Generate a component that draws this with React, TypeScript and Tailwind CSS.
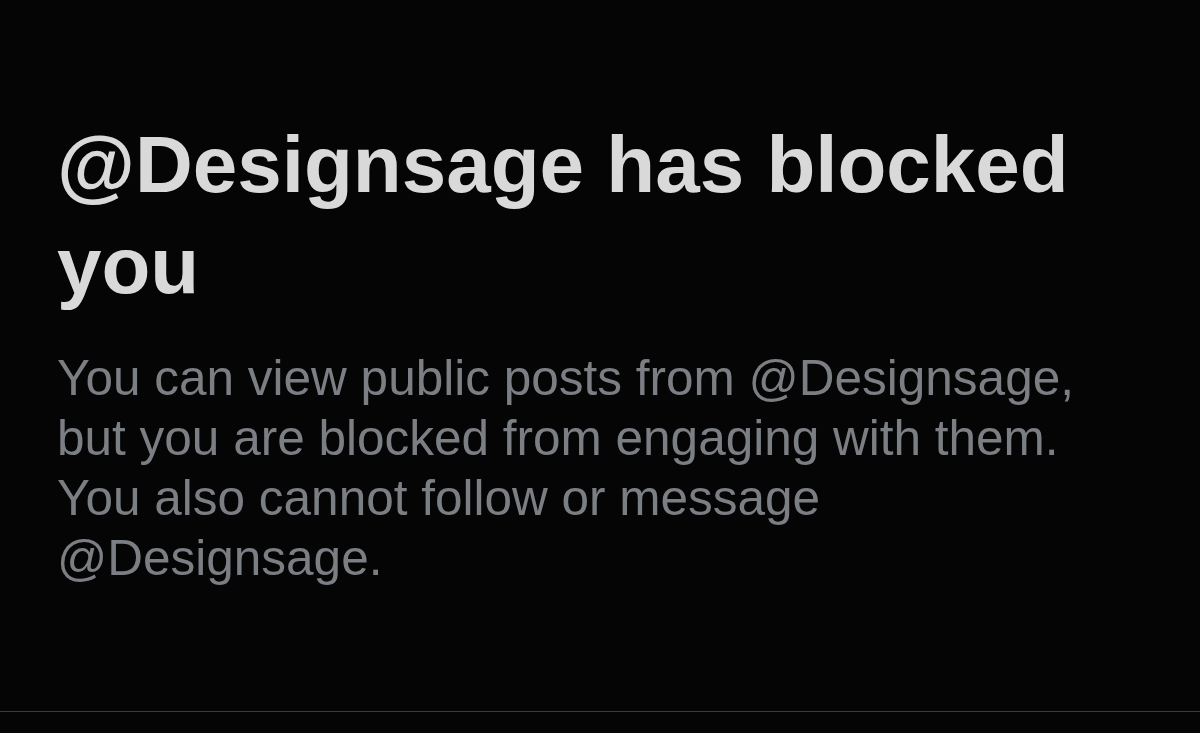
export default function App() {
  return (
    <div className="flex h-[733px] w-full flex-col bg-[#050505] font-['Liberation_Sans',Arial,sans-serif]">
      <main className="flex-1 pl-[57px] pt-[114px]">
        <h1 className="text-[80px] font-bold leading-[101px] text-[#d9d9d9]">
          @Designsage has blocked
          <br />
          you
        </h1>
        <p className="mt-[32px] text-[49.5px] leading-[60px] text-[#7b7e83]">
          You can view public posts from @Designsage,
          <br />
          but you are blocked from engaging with them.
          <br />
          You also cannot follow or message
          <br />
          @Designsage.
        </p>
      </main>
      <div className="mb-[21px] h-px w-full bg-[#3a3a3a]" />
    </div>
  );
}
